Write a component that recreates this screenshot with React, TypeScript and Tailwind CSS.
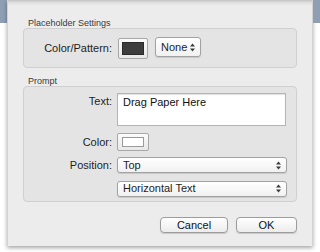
import React from "react";

// small up/down arrows on the popup buttons
const Arrows = () => (
  <svg width="5" height="9" viewBox="0 0 5 9" className="shrink-0">
    <path d="M2.5 0.5 L5 3.5 L0 3.5 Z" fill="#3a3a3a" />
    <path d="M0 5.5 L5 5.5 L2.5 8.5 Z" fill="#3a3a3a" />
  </svg>
);

const Popup = ({ label, className }: { label: string; className: string }) => (
  <div
    className={
      "flex items-center justify-between pl-[5px] pr-[5px] rounded-[3px] border border-[#a2a2a2] bg-[linear-gradient(to_bottom,#ffffff,#f1f1f1)] shadow-[0_1px_1px_rgba(0,0,0,0.12)] text-[11px] text-[#1e1e1e] " +
      className
    }
  >
    <span className="leading-none">{label}</span>
    <Arrows />
  </div>
);

const Button = ({ label, className }: { label: string; className: string }) => (
  <div
    className={
      "flex items-center justify-center rounded-[4px] border border-[#9c9c9c] bg-[linear-gradient(to_bottom,#ffffff,#ececec)] shadow-[0_1px_1px_rgba(0,0,0,0.15)] text-[11px] text-[#111] " +
      className
    }
  >
    {label}
  </div>
);

export default function App() {
  return (
    <div className="w-[320px] h-[252px] bg-white flex overflow-hidden font-['Liberation_Sans',Arial,sans-serif]">
      <div className="w-[7px] flex flex-col">
        <div className="h-[23px] bg-[#8e9eb3]" />
      </div>

      <div className="w-[306px] h-[246px] flex flex-col border-x border-[#d2d2d2] bg-[linear-gradient(to_bottom,#c2c2c2_0px,#e3e3e3_3px,#ececec_6px)] shadow-[0_2px_4px_rgba(0,0,0,0.35)]">
        {/* Placeholder Settings */}
        <div className="pt-[18px] pl-[20px] text-[9px] leading-[10px] text-[#3a3a3a]">
          Placeholder Settings
        </div>
        <div className="mx-[15px] h-[40px] flex items-center rounded-[4px] border border-[#d0d0d0] bg-[#e4e4e4]">
          <div className="w-[88px] text-right text-[11px] text-[#1e1e1e]">Color/Pattern:</div>
          <div className="ml-[6px] w-[30px] h-[21px] p-[3px] rounded-[2px] border border-[#a8a8a8] bg-[linear-gradient(to_bottom,#fbfbfb,#e8e8e8)]">
            <div className="w-full h-full border border-[#2a2a2a] bg-[#3d3d3d]" />
          </div>
          <Popup label="None" className="ml-[7px] w-[46px] h-[20px] -mt-[2px]" />
        </div>

        {/* Prompt */}
        <div className="mt-[8px] pl-[20px] text-[9px] leading-[10px] text-[#3a3a3a]">Prompt</div>
        <div className="mx-[15px] h-[116px] flex flex-col pt-[6px] rounded-[4px] border border-[#d0d0d0] bg-[#e4e4e4]">
          <div className="flex items-start">
            <div className="w-[88px] pt-[1px] text-right text-[11px] leading-[14px] text-[#1e1e1e]">Text:</div>
            <div className="ml-[5px] w-[169px] h-[33px] pl-[5px] pt-[1px] border border-[#b4b4b4] bg-white text-[11px] leading-[14px] text-[#111] shadow-[inset_0_1px_1px_rgba(0,0,0,0.12)]">
              Drag Paper Here
            </div>
          </div>
          <div className="mt-[7px] flex items-center">
            <div className="w-[88px] text-right text-[11px] text-[#1e1e1e]">Color:</div>
            <div className="ml-[5px] w-[32px] h-[18px] px-[4px] py-[3px] rounded-[2px] border border-[#a8a8a8] bg-[linear-gradient(to_bottom,#fbfbfb,#e8e8e8)]">
              <div className="w-full h-full border border-[#9a9a9a] bg-white" />
            </div>
          </div>
          <div className="mt-[6px] flex items-center">
            <div className="w-[88px] text-right text-[11px] text-[#1e1e1e]">Position:</div>
            <Popup label="Top" className="ml-[5px] w-[170px] h-[16px]" />
          </div>
          <div className="mt-[7px] flex items-center">
            <Popup label="Horizontal Text" className="ml-[93px] w-[170px] h-[16px]" />
          </div>
        </div>

        {/* Buttons */}
        <div className="mt-[15px] pr-[15px] flex justify-end gap-[8px]">
          <Button label="Cancel" className="w-[68px] h-[16px]" />
          <Button label="OK" className="w-[61px] h-[16px]" />
        </div>
      </div>

      <div className="w-[7px] flex flex-col">
        <div className="h-[23px] bg-[#8e9eb3]" />
      </div>
    </div>
  );
}
